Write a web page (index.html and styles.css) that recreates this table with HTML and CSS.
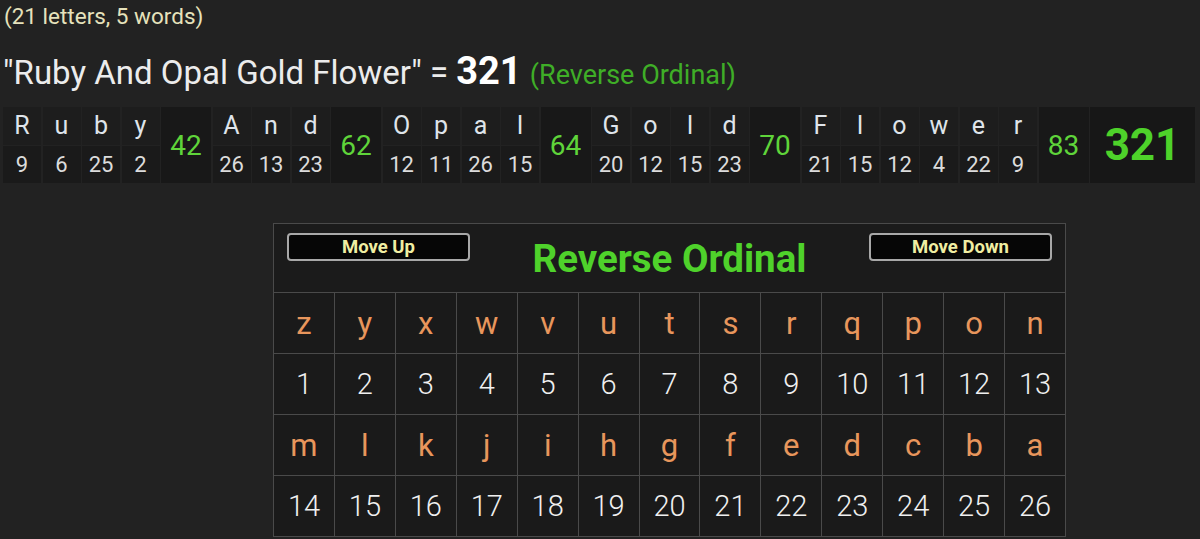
FILE: index.html
```html
<!DOCTYPE html>
<html>
<head>
<meta charset="utf-8">
<link rel="stylesheet" href="styles.css">
</head>
<body>
<div class="count">(21 letters, 5 words)</div>
<div class="phrase">"Ruby And Opal Gold Flower" = <b class="val">321</b> <span class="cipher">(Reverse Ordinal)</span></div>

<div class="breakdown">
  <div class="col"><div class="l">R</div><div class="n">9</div></div>
  <div class="col"><div class="l">u</div><div class="n">6</div></div>
  <div class="col"><div class="l">b</div><div class="n">25</div></div>
  <div class="col"><div class="l">y</div><div class="n">2</div></div>
  <div class="sum">42</div>
  <div class="col"><div class="l">A</div><div class="n">26</div></div>
  <div class="col"><div class="l">n</div><div class="n">13</div></div>
  <div class="col"><div class="l">d</div><div class="n">23</div></div>
  <div class="sum">62</div>
  <div class="col"><div class="l">O</div><div class="n">12</div></div>
  <div class="col"><div class="l">p</div><div class="n">11</div></div>
  <div class="col"><div class="l">a</div><div class="n">26</div></div>
  <div class="col"><div class="l">l</div><div class="n">15</div></div>
  <div class="sum">64</div>
  <div class="col"><div class="l">G</div><div class="n">20</div></div>
  <div class="col"><div class="l">o</div><div class="n">12</div></div>
  <div class="col"><div class="l">l</div><div class="n">15</div></div>
  <div class="col"><div class="l">d</div><div class="n">23</div></div>
  <div class="sum">70</div>
  <div class="col"><div class="l">F</div><div class="n">21</div></div>
  <div class="col"><div class="l">l</div><div class="n">15</div></div>
  <div class="col"><div class="l">o</div><div class="n">12</div></div>
  <div class="col"><div class="l">w</div><div class="n">4</div></div>
  <div class="col"><div class="l">e</div><div class="n">22</div></div>
  <div class="col"><div class="l">r</div><div class="n">9</div></div>
  <div class="sum">83</div>
  <div class="total">321</div>
</div>

<div class="panel">
  <div class="panel-head">
    <button class="btn">Move Up</button>
    <div class="title">Reverse Ordinal</div>
    <button class="btn">Move Down</button>
  </div>
  <div class="chart">
    <div class="c ch">z</div><div class="c ch">y</div><div class="c ch">x</div><div class="c ch">w</div><div class="c ch">v</div><div class="c ch">u</div><div class="c ch">t</div><div class="c ch">s</div><div class="c ch">r</div><div class="c ch">q</div><div class="c ch">p</div><div class="c ch">o</div><div class="c ch">n</div>
    <div class="c">1</div><div class="c">2</div><div class="c">3</div><div class="c">4</div><div class="c">5</div><div class="c">6</div><div class="c">7</div><div class="c">8</div><div class="c">9</div><div class="c">10</div><div class="c">11</div><div class="c">12</div><div class="c">13</div>
    <div class="c ch">m</div><div class="c ch">l</div><div class="c ch">k</div><div class="c ch">j</div><div class="c ch">i</div><div class="c ch">h</div><div class="c ch">g</div><div class="c ch">f</div><div class="c ch">e</div><div class="c ch">d</div><div class="c ch">c</div><div class="c ch">b</div><div class="c ch">a</div>
    <div class="c">14</div><div class="c">15</div><div class="c">16</div><div class="c">17</div><div class="c">18</div><div class="c">19</div><div class="c">20</div><div class="c">21</div><div class="c">22</div><div class="c">23</div><div class="c">24</div><div class="c">25</div><div class="c">26</div>
  </div>
</div>
</body>
</html>
```
FILE: styles.css
```css
html, body {
  margin: 0;
  background: #222222;
}
body {
  padding: 0 3px;
  font-family: Roboto, "Liberation Sans", sans-serif;
  overflow: hidden;
  height: 539px;
}
.count {
  color: #e6e2bc;
  font-size: 22.5px;
  line-height: 26px;
  padding-top: 3px;
  padding-left: 1px;
}
.phrase {
  color: #ececec;
  font-size: 33px;
  line-height: 40px;
  margin-top: 22px;
  white-space: nowrap;
}
.phrase .val {
  color: #fff;
  font-size: 38px;
  font-weight: 700;
}
.phrase .cipher {
  color: #3fae27;
  font-size: 27px;
}
.breakdown {
  display: flex;
  gap: 1.5px;
  margin-top: 12px;
  height: 76px;
}
.col {
  width: 38px;
  display: flex;
  flex-direction: column;
  gap: 1px;
}
.col .l, .col .n {
  flex: 1;
  display: flex;
  align-items: center;
  justify-content: center;
}
.col .l {
  background: #1d1d1d;
  color: #dfe4ea;
  font-size: 25px;
}
.col .n {
  background: #1a1a1a;
  color: #dcdcdc;
  font-size: 22px;
}
.sum {
  width: 50px;
  background: #181818;
  color: #5fd43a;
  font-size: 28px;
  display: flex;
  align-items: center;
  justify-content: center;
}
.total {
  width: 105px;
  background: #171717;
  color: #4ed22a;
  font-size: 44px;
  font-weight: 700;
  display: flex;
  align-items: center;
  justify-content: center;
}
.panel {
  margin-top: 40px;
  margin-left: 270px;
  width: 791px;
  border: 1px solid #4a4a4a;
  background: #1b1b1b;
}
.panel-head {
  height: 68px;
  display: flex;
  align-items: flex-start;
  justify-content: space-between;
  padding: 0 13px;
  border-bottom: 1px solid #4a4a4a;
}
.btn {
  margin-top: 9px;
  width: 183px;
  height: 28px;
  background: #060606;
  border: 2px solid #a8a8a8;
  border-radius: 4px;
  color: #f0eea2;
  font-family: Roboto, "Liberation Sans", sans-serif;
  font-weight: 700;
  font-size: 18.5px;
  line-height: 22px;
  padding: 0;
}
.title {
  color: #4fd22b;
  font-size: 38.5px;
  font-weight: 700;
  margin-top: 12px;
}
.chart {
  display: grid;
  grid-template-columns: repeat(13, 1fr);
  gap: 1px;
  background: #4a4a4a;
}
.c {
  height: 60px;
  background: #1a1a1a;
  color: #f0f0f0;
  font-size: 29px;
  font-weight: 300;
  display: flex;
  align-items: center;
  justify-content: center;
}
.c.ch {
  color: #e8965c;
  font-size: 31px;
  font-weight: 400;
}
```
